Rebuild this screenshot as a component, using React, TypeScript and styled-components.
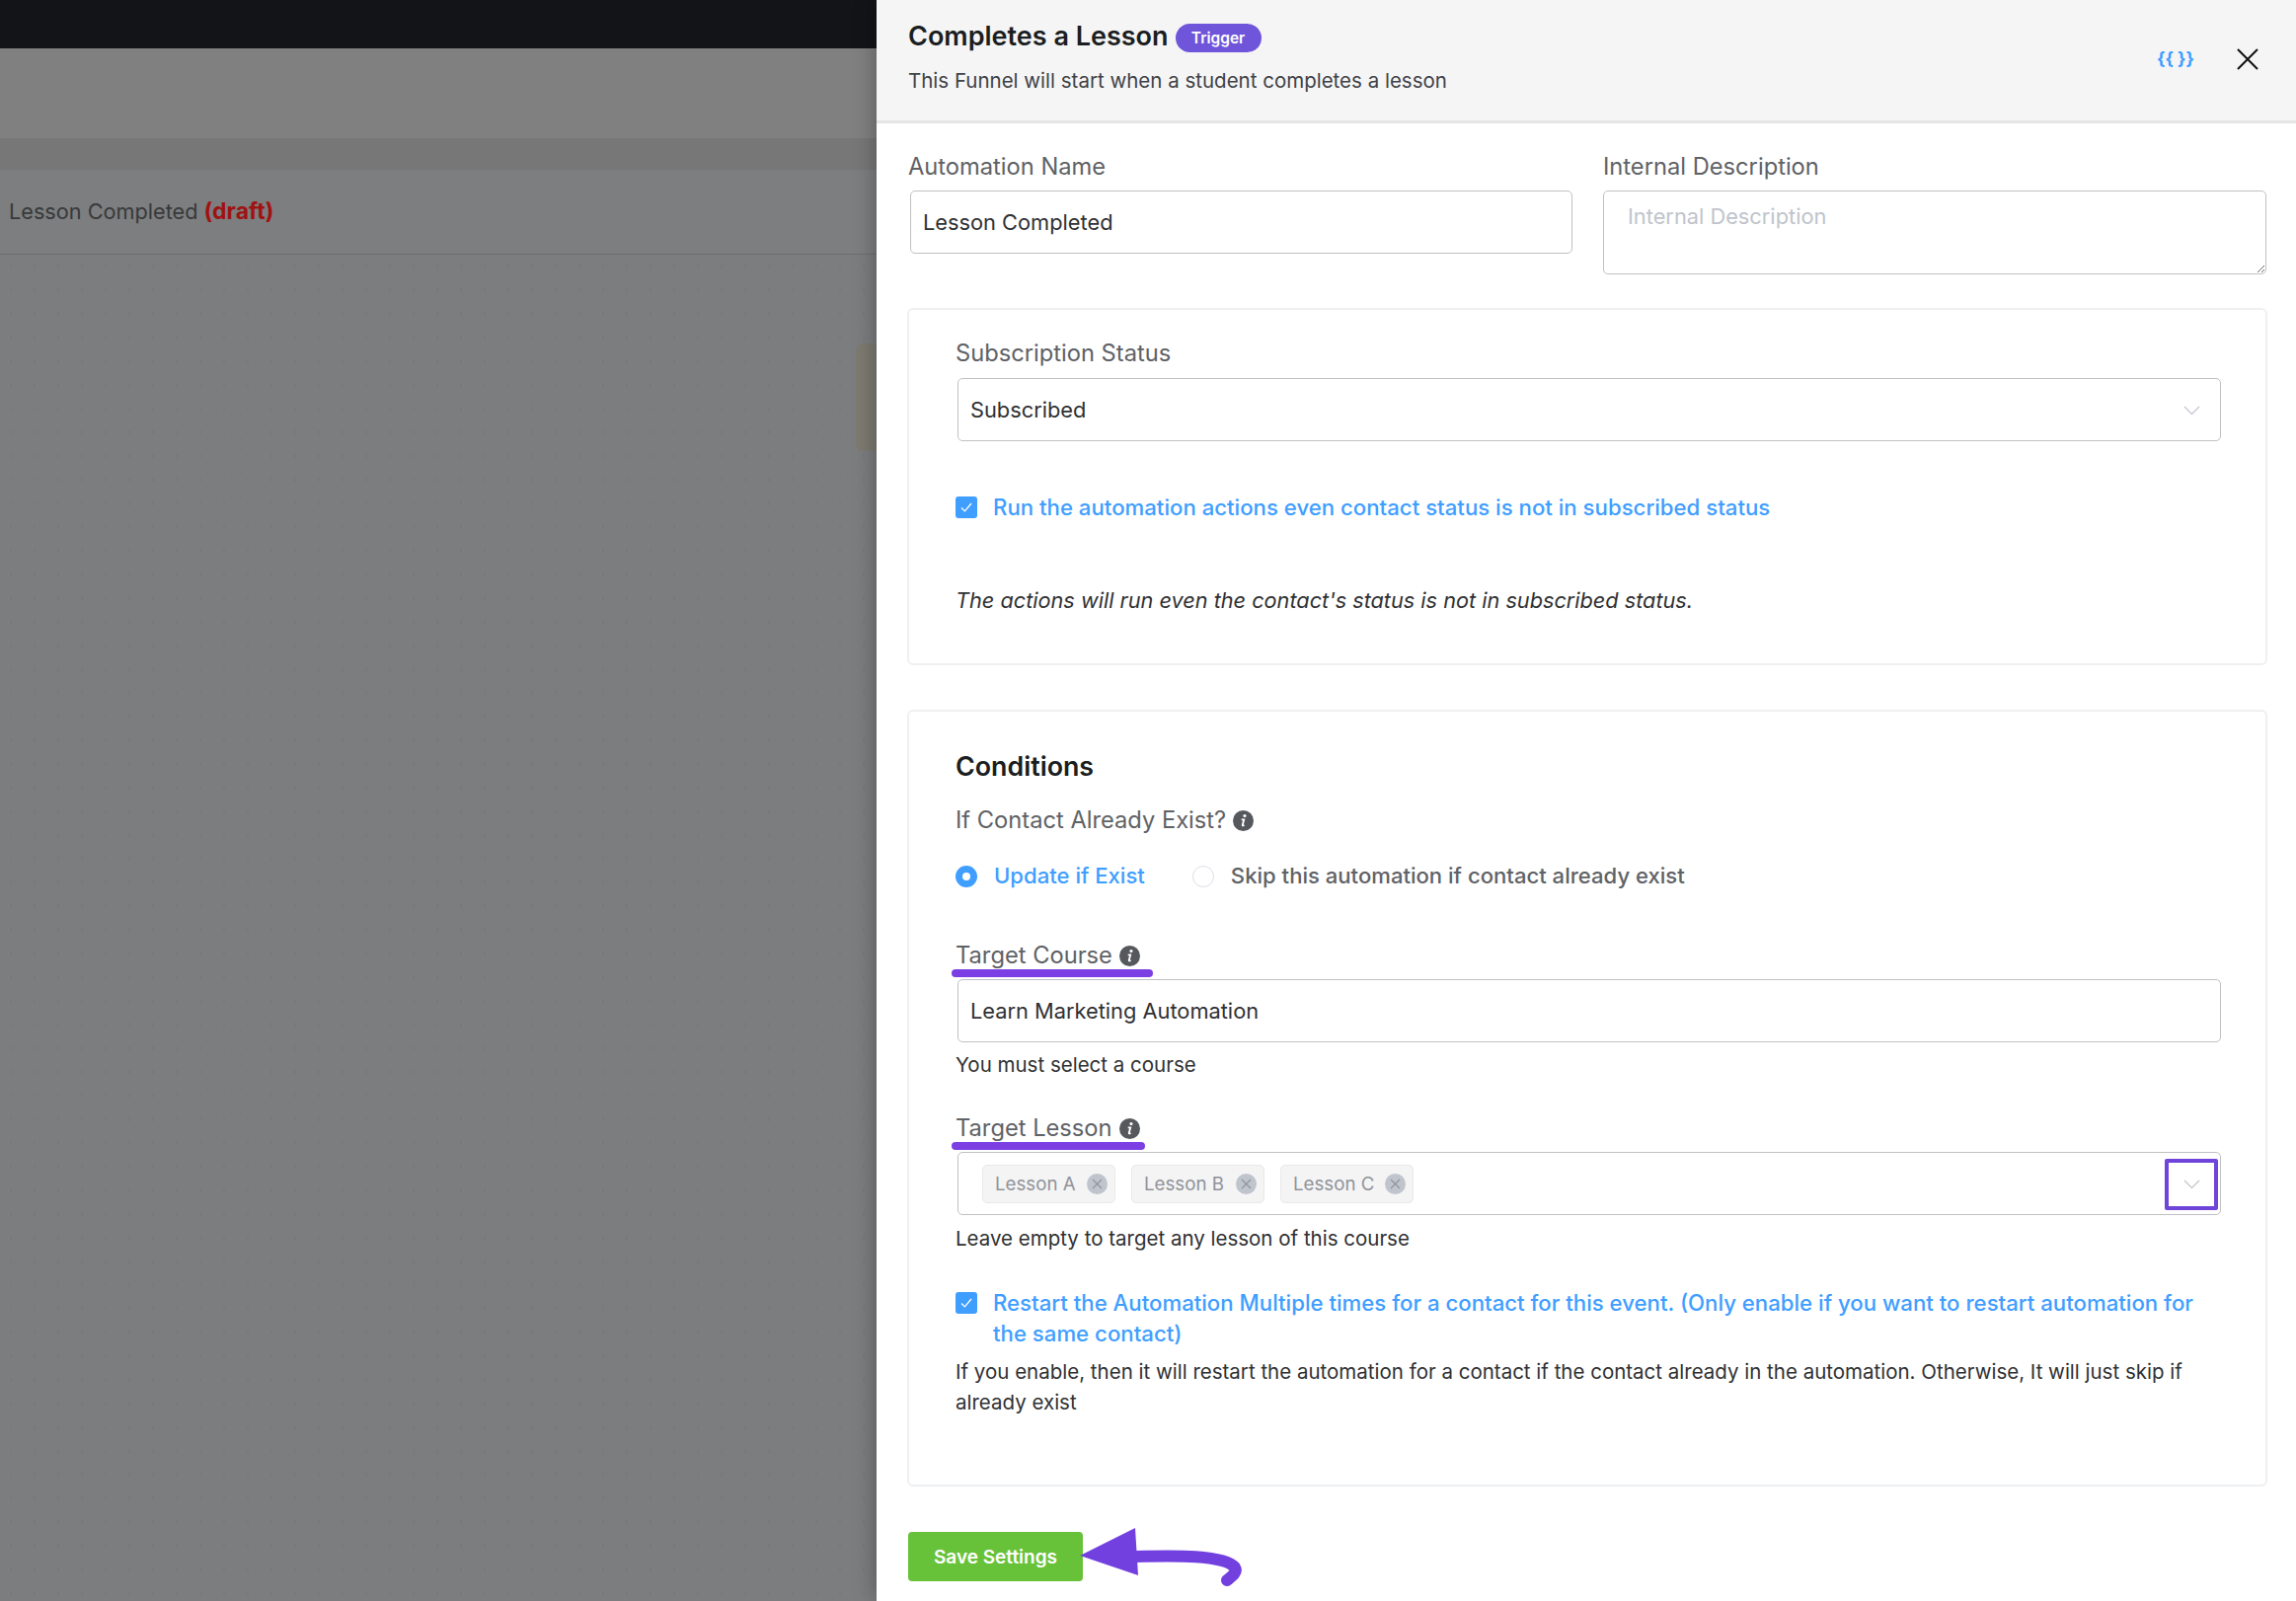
import React from 'react';
import styled, {createGlobalStyle} from 'styled-components';

const GlobalStyle = createGlobalStyle`
    * {
        box-sizing: border-box;
    }

    html, body {
        margin: 0;
        padding: 0;
        background: #7b7d7f;
    }

    body {
        font-family: Inter, "Noto Sans", sans-serif;
        -webkit-font-smoothing: antialiased;
    }
`

const InfoIcon = () => (
    <InfoSvg viewBox="0 0 20 20">
        <circle cx="10" cy="10" r="10" fill="#55585c"/>
        <circle cx="11.4" cy="5.2" r="1.5" fill="#fff"/>
        <path d="M8.3 8.9h2.4l-1.4 5.2c-.2.7.5.8 1.7.2" fill="none" stroke="#fff" strokeWidth="1.7"/>
    </InfoSvg>
);

const Chevron = () => (
    <svg width="17" height="10" viewBox="0 0 17 10">
        <path d="M1 1l7.5 7.5L16 1" fill="none" stroke="#c0c4cc" strokeWidth="1.2"/>
    </svg>
);

const CheckBox = () => (
    <CheckSquare>
        <svg width="14" height="12" viewBox="0 0 14 12">
            <path d="M2 6.5l3.4 3.4L12 2" fill="none" stroke="#fff" strokeWidth="1.3"/>
        </svg>
    </CheckSquare>
);

const Chip = ({label}: { label: string }) => (
    <ChipBox>
        {label}
        <ChipClose>
            <svg width="13" height="13" viewBox="0 0 13 13">
                <path d="M2 2l9 9M11 2l-9 9" stroke="#8f939a" strokeWidth="1.1"/>
            </svg>
        </ChipClose>
    </ChipBox>
);

const App = () => {
    return (
        <Page>
            <GlobalStyle/>
            <Backdrop>
                <TopBar/>
                <Toolbar/>
                <Band/>
                <FunnelRow>Lesson Completed <Draft>(draft)</Draft></FunnelRow>
                <Canvas>
                    <NodeEdge/>
                </Canvas>
            </Backdrop>

            <Drawer>
                <Header>
                    <div>
                        <TitleRow>
                            <Title>Completes a Lesson</Title>
                            <Badge>Trigger</Badge>
                        </TitleRow>
                        <Subtitle>This Funnel will start when a student completes a lesson</Subtitle>
                    </div>
                    <HeaderActions>
                        <Vars>{'{{ }}'}</Vars>
                        <svg width="22" height="22" viewBox="0 0 22 22">
                            <path d="M1 1l20 20M21 1L1 21" stroke="#111" strokeWidth="2"/>
                        </svg>
                    </HeaderActions>
                </Header>

                <Body>
                    <TopFields>
                        <div>
                            <TopLabel>Automation Name</TopLabel>
                            <TextInput $inset readOnly value="Lesson Completed"/>
                        </div>
                        <div>
                            <TopLabel>Internal Description</TopLabel>
                            <TextArea placeholder="Internal Description"/>
                        </div>
                    </TopFields>

                    <Panel $pad="29px 45px 48px 47px" $top={34}>
                        <FieldLabel>Subscription Status</FieldLabel>
                        <SelectBox>
                            Subscribed
                            <SelectArrow><Chevron/></SelectArrow>
                        </SelectBox>
                        <CheckRow $top={51}>
                            <CheckBox/>
                            <CheckText>Run the automation actions even contact status is not in subscribed status</CheckText>
                        </CheckRow>
                        <Note>The actions will run even the contact's status is not in subscribed status.</Note>
                    </Panel>

                    <Panel $pad="38px 45px 68px 47px" $top={45}>
                        <PanelTitle>Conditions</PanelTitle>
                        <FieldLabel $top={23}>If Contact Already Exist? <InfoIcon/></FieldLabel>
                        <RadioRow>
                            <RadioOption $active>
                                <RadioDot $active/>
                                Update if Exist
                            </RadioOption>
                            <RadioOption>
                                <RadioDot/>
                                Skip this automation if contact already exist
                            </RadioOption>
                        </RadioRow>

                        <FieldLabel $top={50}>
                            Target Course <InfoIcon/>
                            <Underline $width={204}/>
                        </FieldLabel>
                        <CourseInput readOnly value="Learn Marketing Automation"/>
                        <Help $top={7}>You must select a course</Help>

                        <FieldLabel $top={34}>
                            Target Lesson <InfoIcon/>
                            <Underline $width={196}/>
                        </FieldLabel>
                        <MultiSelect>
                            <Chip label="Lesson A"/>
                            <Chip label="Lesson B"/>
                            <Chip label="Lesson C"/>
                            <SelectArrow><Chevron/></SelectArrow>
                            <ArrowHighlight/>
                        </MultiSelect>
                        <Help $top={8}>Leave empty to target any lesson of this course</Help>

                        <CheckRow $top={34}>
                            <CheckBox/>
                            <CheckText>Restart the Automation Multiple times for a contact for this event. (Only enable if you want to restart automation for the same contact)</CheckText>
                        </CheckRow>
                        <Help $top={8}>If you enable, then it will restart the automation for a contact if the contact already in the automation. Otherwise, It will just skip if already exist</Help>
                    </Panel>

                    <Footer>
                        <SaveButton>Save Settings</SaveButton>
                        <ArrowSvg viewBox="0 0 170 60" width="170" height="60">
                            <path d="M56 29c40-1 90-2 101 11 3 5-3 9-8 13" fill="none" stroke="#7340e0" strokeWidth="12" strokeLinecap="round"/>
                            <path d="M0 28L56 0l3 48z" fill="#7340e0"/>
                        </ArrowSvg>
                    </Footer>
                </Body>
            </Drawer>
        </Page>
    );
};

export default App;

const Page = styled.div`
    display: flex;
    width: 2326px;
    height: 1622px;
    overflow: hidden;
`

const Backdrop = styled.div`
    display: flex;
    flex-direction: column;
    width: 888px;
    flex-shrink: 0;
`

const TopBar = styled.div`
    height: 49px;
    background: #121417;
`

const Toolbar = styled.div`
    height: 91px;
    background: #7f807f;
`

const Band = styled.div`
    height: 32px;
    background: #767776;
`

const FunnelRow = styled.div`
    height: 86px;
    padding: 0 0 2px 9px;
    display: flex;
    align-items: center;
    gap: 6px;
    font-size: 21.7px;
    color: #37393b;
    background: #7c7e7f;
    border-bottom: 1px solid #6c6e70;
`

const Draft = styled.b`
    color: #a01212;
    font-size: 23px;
    font-weight: 700;
`

const Canvas = styled.div`
    position: relative;
    flex: 1;
    background-color: #7b7d7f;
    background-image: radial-gradient(ellipse 1px 2px, #74767880 90%, transparent 100%);
    background-size: 24px 24px;
    background-position: -1px 0;
`

const NodeEdge = styled.div`
    position: absolute;
    top: 90px;
    right: 0;
    width: 21px;
    height: 109px;
    border-radius: 8px 0 0 8px;
    background: #7d7a70;
`

const Drawer = styled.div`
    position: relative;
    flex: 1;
    background: #fff;
    box-shadow: 0 0 22px rgba(0, 0, 0, 0.32);
`

const Header = styled.header`
    height: 125px;
    display: flex;
    justify-content: space-between;
    align-items: flex-start;
    padding: 20px 38px 0 32px;
    background: #f5f5f6;
    border-bottom: 3px solid #e6e6e7;
`

const TitleRow = styled.div`
    display: flex;
    align-items: center;
    gap: 7px;
`

const Title = styled.h1`
    margin: 0;
    font-size: 27px;
    line-height: 34px;
    font-weight: 600;
    color: #1b1e21;
`

const Badge = styled.span`
    width: 87px;
    height: 29px;
    border-radius: 15px;
    display: flex;
    align-items: center;
    justify-content: center;
    margin-top: 2px;
    background: #6f55d9;
    color: #fff;
    font-size: 15.5px;
    font-weight: 600;
`

const Subtitle = styled.p`
    margin: 13px 0 0;
    font-size: 20.5px;
    line-height: 30px;
    color: #3f4246;
`

const HeaderActions = styled.div`
    display: flex;
    align-items: center;
    gap: 43px;
    margin-top: 29px;
`

const Vars = styled.span`
    font-size: 18px;
    line-height: 22px;
    font-weight: 700;
    color: #409eff;
`

const InfoSvg = styled.svg`
    width: 21px;
    height: 21px;
    margin-left: 1px;
    flex-shrink: 0;
`

const Body = styled.div`
    padding: 29px 29px 0 31px;
`

const TopFields = styled.div`
    display: grid;
    grid-template-columns: 673px 672px;
    column-gap: 31px;
    padding-left: 1px;
`

const FieldLabel = styled.label<{ $top?: number }>`
    position: relative;
    display: flex;
    align-items: center;
    gap: 6px;
    width: max-content;
    margin-top: ${p => p.$top ?? 0}px;
    font-size: 23.7px;
    line-height: 30px;
    color: #606266;
`

const TopLabel = styled(FieldLabel)`
    margin-bottom: 9px;
`

const boxText = `
    font-family: Inter, "Noto Sans", sans-serif;
    font-size: 21.8px;
    color: #303133;
    background: #fff;
    border: 1px solid #bfc1c4;
    border-radius: 5px;
    outline: none;
`

const TextInput = styled.input<{ $inset?: boolean }>`
    ${boxText};
    display: block;
    width: ${p => (p.$inset ? '671px' : '100%')};
    margin-left: ${p => (p.$inset ? '2px' : '0')};
    height: 64px;
    padding: 0 12px;
`

const TextArea = styled.textarea`
    ${boxText};
    display: block;
    width: 100%;
    height: 85px;
    padding: 12px 24px;
    line-height: 26px;
    resize: vertical;

    &::placeholder {
        color: #c0c4cc;
    }
`

const Panel = styled.section<{ $pad: string, $top: number }>`
    margin-top: ${p => p.$top}px;
    padding: ${p => p.$pad};
    border: 2px solid #eef0f2;
    border-radius: 6px;
`

const SelectBox = styled.div`
    ${boxText};
    position: relative;
    display: flex;
    align-items: center;
    height: 64px;
    margin: 10px 0 0 2px;
    padding: 0 12px;
`

const SelectArrow = styled.span`
    position: absolute;
    right: 20px;
    top: 27px;
    display: flex;
`

const CheckRow = styled.div<{ $top: number }>`
    display: flex;
    gap: 16px;
    margin-top: ${p => p.$top}px;
`

const CheckSquare = styled.span`
    width: 22px;
    height: 22px;
    flex-shrink: 0;
    margin-top: 5px;
    display: flex;
    align-items: center;
    justify-content: center;
    border-radius: 3px;
    background: #409eff;
`

const CheckText = styled.span`
    font-size: 22.2px;
    line-height: 31px;
    font-weight: 500;
    color: #409eff;
`

const Note = styled.p`
    margin: 64px 0 0;
    font-size: 21.7px;
    line-height: 31px;
    font-style: italic;
    color: #303133;
`

const PanelTitle = styled.h2`
    margin: 0;
    font-size: 26.8px;
    line-height: 34px;
    font-weight: 600;
    color: #1b1e21;
`

const RadioRow = styled.div`
    display: flex;
    gap: 48px;
    margin-top: 26px;
`

const RadioOption = styled.span<{ $active?: boolean }>`
    display: flex;
    align-items: center;
    gap: 17px;
    font-size: 22.1px;
    line-height: 31px;
    font-weight: 500;
    color: ${p => (p.$active ? '#409eff' : '#606266')};
`

const RadioDot = styled.span<{ $active?: boolean }>`
    width: 22px;
    height: 22px;
    border-radius: 50%;
    background: #fff;
    border: ${p => (p.$active ? '7px solid #409eff' : '1px solid #dcdfe6')};
`

const Underline = styled.span<{ $width: number }>`
    position: absolute;
    left: -4px;
    bottom: -7px;
    width: ${p => p.$width}px;
    height: 8px;
    border-radius: 4px;
    background: #7b3fe4;
`

const CourseInput = styled(TextInput)`
    width: auto;
    min-width: calc(100% - 2px);
    margin: 9px 0 0 2px;
`

const Help = styled.p<{ $top: number }>`
    margin: ${p => p.$top}px 0 0;
    font-size: 20.5px;
    line-height: 31px;
    color: #303133;
`

const MultiSelect = styled.div`
    ${boxText};
    position: relative;
    display: flex;
    align-items: center;
    gap: 16px;
    height: 64px;
    margin: 9px 0 0 2px;
    padding: 0 24px;
`

const ChipBox = styled.span`
    display: flex;
    align-items: center;
    justify-content: space-between;
    width: 135px;
    height: 39px;
    padding: 0 7px 0 12px;
    font-size: 18.7px;
    color: #909399;
    background: #f4f4f5;
    border: 1px solid #e9e9eb;
    border-radius: 5px;
`

const ChipClose = styled.span`
    width: 21px;
    height: 21px;
    display: flex;
    align-items: center;
    justify-content: center;
    border-radius: 50%;
    background: #c0c4cc;
`

const ArrowHighlight = styled.span`
    position: absolute;
    top: 6px;
    right: 2px;
    width: 54px;
    height: 52px;
    border: 4px solid #6f45d9;
    border-radius: 2px;
`

const Footer = styled.div`
    display: flex;
    align-items: flex-start;
    margin-top: 46px;
    padding-left: 1px;
`

const SaveButton = styled.button`
    width: 177px;
    height: 50px;
    border: none;
    border-radius: 4px;
    background: #67c23a;
    color: #fff;
    font-family: Inter, "Noto Sans", sans-serif;
    font-size: 19px;
    font-weight: 600;
`

const ArrowSvg = styled.svg`
    margin: -4px 0 0 -3px;
`
